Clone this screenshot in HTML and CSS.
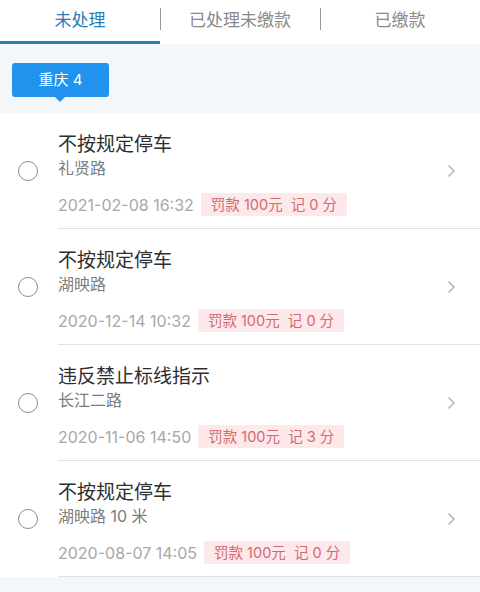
FILE: index.html
```html
<!DOCTYPE html>
<html lang="zh">
<head>
<meta charset="utf-8">
<link rel="stylesheet" href="styles.css">
</head>
<body>
<div class="tabs">
  <div class="tab active">未处理</div>
  <div class="tab">已处理未缴款</div>
  <div class="tab">已缴款</div>
</div>
<div class="filter">
  <div class="badge">重庆 4</div>
</div>
<ul class="list">
  <li class="item">
    <div class="radio-col"><span class="radio"></span></div>
    <div class="body">
      <div class="text">
        <div class="title">不按规定停车</div>
        <div class="place">礼贤路</div>
        <div class="meta"><span class="date">2021-02-08 16:32</span><span class="tag">罚款 100元&nbsp; 记 0 分</span></div>
      </div>
      <svg class="chev" width="9" height="14" viewBox="0 0 9 14"><polyline points="1.5,1.5 7,7 1.5,12.5" fill="none" stroke="#b8b8b8" stroke-width="1.6"/></svg>
    </div>
  </li>
  <li class="item">
    <div class="radio-col"><span class="radio"></span></div>
    <div class="body">
      <div class="text">
        <div class="title">不按规定停车</div>
        <div class="place">湖映路</div>
        <div class="meta"><span class="date">2020-12-14 10:32</span><span class="tag">罚款 100元&nbsp; 记 0 分</span></div>
      </div>
      <svg class="chev" width="9" height="14" viewBox="0 0 9 14"><polyline points="1.5,1.5 7,7 1.5,12.5" fill="none" stroke="#b8b8b8" stroke-width="1.6"/></svg>
    </div>
  </li>
  <li class="item">
    <div class="radio-col"><span class="radio"></span></div>
    <div class="body">
      <div class="text">
        <div class="title">违反禁止标线指示</div>
        <div class="place">长江二路</div>
        <div class="meta"><span class="date">2020-11-06 14:50</span><span class="tag">罚款 100元&nbsp; 记 3 分</span></div>
      </div>
      <svg class="chev" width="9" height="14" viewBox="0 0 9 14"><polyline points="1.5,1.5 7,7 1.5,12.5" fill="none" stroke="#b8b8b8" stroke-width="1.6"/></svg>
    </div>
  </li>
  <li class="item">
    <div class="radio-col"><span class="radio"></span></div>
    <div class="body">
      <div class="text">
        <div class="title">不按规定停车</div>
        <div class="place">湖映路 10 米</div>
        <div class="meta"><span class="date">2020-08-07 14:05</span><span class="tag">罚款 100元&nbsp; 记 0 分</span></div>
      </div>
      <svg class="chev" width="9" height="14" viewBox="0 0 9 14"><polyline points="1.5,1.5 7,7 1.5,12.5" fill="none" stroke="#b8b8b8" stroke-width="1.6"/></svg>
    </div>
  </li>
</ul>
</body>
</html>
```
FILE: styles.css
```css
* { box-sizing: border-box; }
html, body {
  margin: 0;
  padding: 0;
  background: #f3f7f9;
  font-family: "Inter", "Noto Sans CJK SC", sans-serif;
}
.tabs {
  display: flex;
  height: 44px;
  background: #fff;
}
.tab {
  flex: 1;
  text-align: center;
  font-size: 17px;
  line-height: 40px;
  color: #8a8a8a;
  position: relative;
  border-bottom: 3px solid transparent;
}
.tab + .tab::before {
  content: "";
  position: absolute;
  left: 0;
  top: 8px;
  height: 22px;
  width: 1px;
  background: #9a9a9a;
}
.tab.active {
  color: #2b7bb4;
  border-bottom-color: #2b7bb4;
}
.filter {
  height: 69px;
  padding: 19px 0 0 12px;
}
.badge {
  position: relative;
  width: 97px;
  height: 34px;
  background: #2093ef;
  border-radius: 3px;
  color: #fff;
  font-size: 15px;
  line-height: 34px;
  text-align: center;
}
.badge::after {
  content: "";
  position: absolute;
  left: 43px;
  bottom: -5px;
  border-left: 5px solid transparent;
  border-right: 5px solid transparent;
  border-top: 5px solid #2093ef;
}
.list {
  list-style: none;
  margin: 0;
  padding: 0;
  background: #fff;
}
.item {
  display: flex;
  height: 116px;
}
.radio-col {
  width: 58px;
  display: flex;
  align-items: center;
  padding-left: 18px;
}
.radio {
  width: 20px;
  height: 20px;
  border: 1px solid #8c8c8c;
  border-radius: 50%;
}
.body {
  flex: 1;
  display: flex;
  align-items: center;
  border-bottom: 1px solid #e2e2e2;
}
.text {
  flex: 1;
  align-self: flex-start;
  padding-top: 18px;
}
.title {
  font-size: 19px;
  line-height: 24px;
  color: #2e2e2e;
  font-family: "Noto Sans CJK SC", sans-serif;
}
.place {
  margin-top: 2px;
  font-size: 16px;
  line-height: 22px;
  color: #7c7c7c;
}
.meta {
  margin-top: 14px;
  display: flex;
  align-items: center;
  gap: 7px;
}
.date {
  font-size: 16px;
  color: #a8a8a8;
}
.tag {
  height: 23px;
  line-height: 23px;
  padding: 0 10px;
  background: #fde8ea;
  color: #d26a75;
  font-size: 14.5px;
}
.chev {
  margin-right: 24px;
}
```
